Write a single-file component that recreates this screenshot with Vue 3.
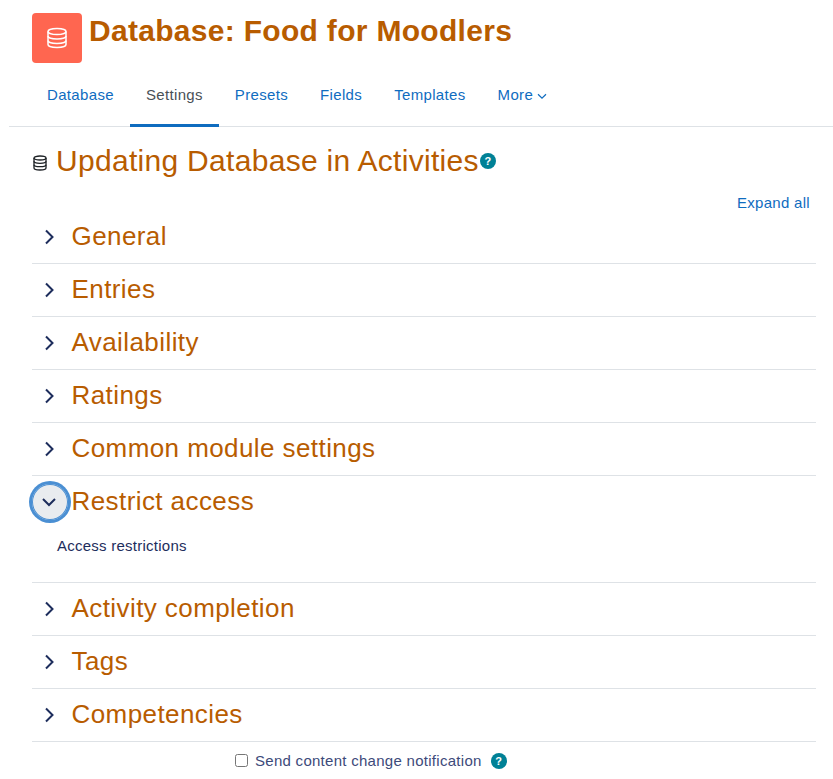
<template>
  <div class="page">
    <header class="page-head">
      <div class="activity-icon">
        <svg width="24" height="24" viewBox="0 0 24 24" fill="none" stroke="#fff" stroke-width="1.5">
          <ellipse cx="12" cy="5.5" rx="9" ry="3" />
          <path d="M3 5.5v13c0 1.7 4 3 9 3s9-1.300 9-3v-13" />
          <path d="M3 10c0 1.700 4 3 9 3s9-1.300 9-3" />
          <path d="M3 14.500c0 1.700 4 3 9 3s9-1.300 9-3" />
        </svg>
      </div>
      <h1>Database: Food for Moodlers</h1>
    </header>

    <nav class="tabs">
      <a
        v-for="tab in tabs"
        :key="tab"
        class="tab"
        :class="{ active: tab === 'Settings' }"
      >
        {{ tab }}
      </a>
      <a class="tab">
        More
        <svg class="more-caret" width="10" height="10" viewBox="0 0 10 10" fill="none" stroke="#0f6cbf" stroke-width="1.2">
          <path d="M1 3.300l4 3.800 4-3.800" />
        </svg>
      </a>
    </nav>

    <main class="content">
      <h2 class="form-title">
        <svg class="title-icon" width="14" height="16" viewBox="0 0 14 16" fill="none" stroke="#1d2125" stroke-width="1.300">
          <ellipse cx="7" cy="3" rx="6" ry="2" />
          <path d="M1 3v10c0 1.100 2.700 2 6 2s6-.9 6-2V3" />
          <path d="M1 6.300c0 1.100 2.700 2 6 2s6-.9 6-2" />
          <path d="M1 9.700c0 1.100 2.700 2 6 2s6-.9 6-2" />
        </svg>
        <span>Updating Database in Activities</span>
        <span class="help help-title">?</span>
      </h2>

      <div class="expand-row"><a>Expand all</a></div>

      <section
        v-for="section in sections"
        :key="section.name"
        class="section"
        :class="{ open: section.open }"
      >
        <div class="section-head">
          <span class="toggle">
            <svg width="16" height="16" viewBox="0 0 16 16" fill="none" stroke="#1d2d5c" stroke-width="2">
              <path v-if="section.open" d="M1 5l6 6 6-6" />
              <path v-else d="M4 1.500L10.500 8 4 14.500" />
            </svg>
          </span>
          <h3>{{ section.name }}</h3>
        </div>
        <p v-if="section.open" class="section-body">Access restrictions</p>
      </section>

      <label class="notify">
        <input type="checkbox" />
        <span>Send content change notification</span>
        <span class="help">?</span>
      </label>
    </main>
  </div>
</template>

<script setup>
const tabs = ['Database', 'Settings', 'Presets', 'Fields', 'Templates']

const sections = [
  { name: 'General' },
  { name: 'Entries' },
  { name: 'Availability' },
  { name: 'Ratings' },
  { name: 'Common module settings' },
  { name: 'Restrict access', open: true },
  { name: 'Activity completion' },
  { name: 'Tags' },
  { name: 'Competencies' },
]
</script>

<style>
html,
body {
  margin: 0;
  background: #fff;
  overflow: hidden;
}
</style>

<style scoped>
.page {
  height: 779px;
  overflow: hidden;
  padding-left: 9px;
  font-family: 'Liberation Sans', Arial, sans-serif;
  color: #1d2d5c;
}

.page-head {
  display: flex;
  gap: 7px;
  padding: 13px 0 0 23px;
  height: 50px;
}

.activity-icon {
  width: 50px;
  height: 50px;
  border-radius: 4px;
  background: #ff6650;
  display: flex;
  align-items: center;
  justify-content: center;
}

h1 {
  margin: 0;
  font-size: 30px;
  line-height: 36px;
  font-weight: 700;
  letter-spacing: 0.3px;
  color: #b85c00;
}

.tabs {
  display: flex;
  margin-top: 13px;
  padding-left: 22px;
  height: 50px;
  border-bottom: 1px solid #dee2e6;
}

.tab {
  box-sizing: border-box;
  height: 51px;
  padding: 0 16px 12px;
  display: flex;
  align-items: center;
  gap: 4px;
  font-size: 15px;
  letter-spacing: 0.34px;
  color: #0f6cbf;
  border-bottom: 3px solid transparent;
}

.tab.active {
  color: #495057;
  border-bottom-color: #0f6cbf;
}

.more-caret {
  margin-top: 3px;
}

.content {
  padding: 0 17px 0 23px;
}

.form-title {
  display: flex;
  align-items: center;
  margin: 15px 0 0;
  height: 38px;
  font-size: 30px;
  font-weight: 400;
  letter-spacing: 0.3px;
  color: #b85c00;
  white-space: nowrap;
}

.title-icon {
  margin: 3px 9px 0 1px;
}

.help {
  width: 16px;
  height: 16px;
  border-radius: 50%;
  background: #008196;
  color: #fff;
  font-size: 11px;
  font-weight: 700;
  line-height: 16px;
  text-align: center;
  letter-spacing: 0;
}

.help-title {
  margin-left: 1px;
}

.expand-row {
  display: flex;
  justify-content: flex-end;
  padding-right: 6px;
  margin-top: 13px;
  font-size: 15px;
  line-height: 20px;
  letter-spacing: 0.3px;
  color: #0f6cbf;
}

.section {
  border-bottom: 1px solid #dee2e6;
}

.section-head {
  box-sizing: border-box;
  display: flex;
  align-items: center;
  height: 52px;
  padding-bottom: 2px;
}

.section:first-of-type .section-head {
  height: 50px;
  padding-bottom: 4px;
}

.toggle {
  position: relative;
  top: 1px;
  width: 36px;
  height: 36px;
  margin-right: 3.5px;
  border-radius: 50%;
  display: flex;
  align-items: center;
  justify-content: center;
}

.open .toggle {
  background: #e9ecef;
  box-shadow: 0 0 0 3px #4a8fd3, inset 0 0 0 1px #4a8fd3;
}

h3 {
  margin: 0;
  font-size: 26px;
  font-weight: 400;
  letter-spacing: 0.42px;
  color: #b85c00;
  white-space: nowrap;
}

.section-body {
  margin: 0;
  height: 54px;
  padding: 8px 0 0 25px;
  box-sizing: border-box;
  font-size: 15px;
  line-height: 20px;
  letter-spacing: 0.25px;
}

.notify {
  display: flex;
  align-items: center;
  height: 38px;
  padding-bottom: 2px;
  box-sizing: border-box;
  padding-left: 203px;
  font-size: 15px;
  letter-spacing: 0.28px;
  color: #3d4a7a;
}

.notify input {
  width: 13px;
  height: 13px;
  margin: 0 7px 0 0;
}

.notify .help {
  margin: 1px 0 0 9px;
}
</style>
